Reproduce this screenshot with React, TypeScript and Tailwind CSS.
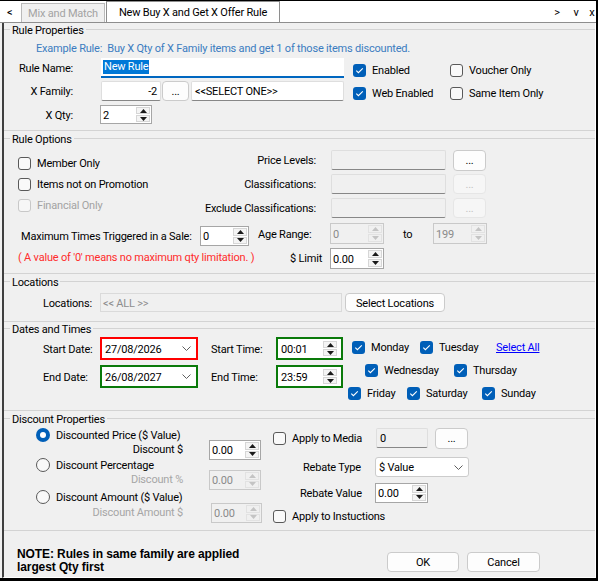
import React from "react";

type Children = { children?: React.ReactNode };

// text baseline nudge used on every text run
const T = "translate-y-px";

function Tri({ up = false, c }: { up?: boolean; c: string }) {
  return (
    <svg width="7" height="4" viewBox="0 0 7 4">
      <path d={up ? "M0 4 L3.5 0 L7 4Z" : "M0 0 L7 0 L3.5 4Z"} fill={c} />
    </svg>
  );
}

function Chevron() {
  return (
    <svg width="9" height="5" viewBox="0 0 9 5">
      <path d="M0.5 0.5 L4.5 4.5 L8.5 0.5" stroke="#5f5f5f" strokeWidth="1" fill="none" />
    </svg>
  );
}

function SpinButtons({ disabled = false, className = "" }: { disabled?: boolean; className?: string }) {
  const c = disabled ? "#c4c4c4" : "#1a1a1a";
  const half = `flex-1 flex items-center justify-center border ${
    disabled ? "border-[#e2e2e2] bg-[#f0f0f0]" : "border-[#d6d6d6] bg-[#f4f4f4]"
  }`;
  return (
    <div className={`w-[14px] flex flex-col gap-px shrink-0 ${className}`}>
      <div className={half}>
        <Tri up c={c} />
      </div>
      <div className={half}>
        <Tri c={c} />
      </div>
    </div>
  );
}

function Spin({ value, className = "", disabled = false }: { value: string; className?: string; disabled?: boolean }) {
  return (
    <div
      className={`flex shrink-0 border ${
        disabled ? "border-[#c9c9c9] bg-[#f0f0f0] text-[#8a8a8a]" : "border-[#a6a6a6] bg-white"
      } ${className}`}
    >
      <div className="flex-1 flex items-center pl-[2px]">
        <span className={T}>{value}</span>
      </div>
      <SpinButtons disabled={disabled} className="py-[1px] mr-[1px]" />
    </div>
  );
}

function Check({
  label,
  checked = false,
  disabled = false,
  className = "",
}: {
  label: string;
  checked?: boolean;
  disabled?: boolean;
  className?: string;
}) {
  return (
    <div className={`flex items-center shrink-0 ${className}`}>
      <span
        className={`w-[13px] h-[13px] rounded-[3px] shrink-0 flex items-center justify-center ${
          checked
            ? "bg-[#005fb8]"
            : disabled
            ? "border border-[#c8c8c8] bg-[#f6f6f6]"
            : "border border-[#595959] bg-[#f9f9f9]"
        }`}
      >
        {checked && (
          <svg width="13" height="13" viewBox="0 0 13 13">
            <path d="M3.3 6.6 L5.4 8.7 L9.8 4.3" stroke="white" strokeWidth="1.1" fill="none" />
          </svg>
        )}
      </span>
      <span className={`ml-[6px] whitespace-nowrap ${T} ${disabled ? "text-[#a3a3a3]" : ""}`}>{label}</span>
    </div>
  );
}

function Radio({ label, checked = false, className = "" }: { label: string; checked?: boolean; className?: string }) {
  return (
    <div className={`flex items-center h-[14px] ${className}`}>
      <span
        className={`w-[14px] h-[14px] rounded-full shrink-0 flex items-center justify-center ${
          checked ? "bg-[#005fb8]" : "border border-[#595959] bg-[#f9f9f9]"
        }`}
      >
        {checked && <span className="w-[6px] h-[6px] rounded-full bg-white" />}
      </span>
      <span className={`ml-[6px] whitespace-nowrap ${T}`}>{label}</span>
    </div>
  );
}

function Field({ className = "", disabled = false, children }: Children & { className?: string; disabled?: boolean }) {
  return (
    <div
      className={`h-[20px] shrink-0 flex items-center px-[3px] rounded-[2px] border border-[#dedede] border-b-[#878787] ${
        disabled ? "bg-[#f0f0f0]" : "bg-white"
      } ${className}`}
    >
      <span className={T}>{children}</span>
    </div>
  );
}

function Btn({ className = "", disabled = false, children }: Children & { className?: string; disabled?: boolean }) {
  return (
    <div
      className={`shrink-0 flex items-center justify-center rounded-[4px] border ${
        disabled ? "border-[#e6e6e6] bg-[#f6f6f6] text-[#c2c2c2]" : "border-[#cbcbcb] bg-[#fdfdfd]"
      } ${className}`}
    >
      <span className={T}>{children}</span>
    </div>
  );
}

function DateBox({ value, red = false }: { value: string; red?: boolean }) {
  return (
    <div
      className={`w-[98px] h-[23px] shrink-0 border-2 ${
        red ? "border-[#ff0000]" : "border-[#0a7a0a]"
      } bg-white flex items-center justify-between pl-[3px] pr-[5px]`}
    >
      <span className={T}>{value}</span>
      <Chevron />
    </div>
  );
}

function TimeBox({ value }: { value: string }) {
  return (
    <div className="w-[67px] h-[23px] shrink-0 border-2 border-[#0a7a0a] bg-white flex items-center pl-[3px] pr-[4px]">
      <span className={`flex-1 ${T}`}>{value}</span>
      <SpinButtons className="h-[15px]" />
    </div>
  );
}

function Group({ title, className = "", children }: Children & { title: string; className?: string }) {
  return (
    <section className={`relative shrink-0 border-y border-[#d3d3d3] ${className}`}>
      <span className="absolute left-[6px] top-[-6px] px-[2px] bg-[#f0f0f0] whitespace-nowrap">{title}</span>
      {children}
    </section>
  );
}

export default function App() {
  return (
    <div className="w-[598px] h-[581px] overflow-hidden bg-[#f0f0f0] border-t border-r-2 border-b-[3px] border-black flex flex-col font-['Roboto',sans-serif] text-[11px] leading-[14px] tracking-[-0.2px] text-black">
      {/* tab strip */}
      <div className="h-[22px] shrink-0 bg-white border-b border-[#8e8e8e] flex items-end">
        <span className={`self-center ml-[7px] w-[14px] ${T}`}>&lt;</span>
        <div className="h-[19px] w-[84px] border border-b-0 border-[#bababa] bg-[#f0f0f0] text-[#a3a3a3] flex items-center justify-center">
          <span className={T}>Mix and Match</span>
        </div>
        <div className="h-[21px] w-[174px] ml-px border-x border-t border-[#8e8e8e] bg-white flex items-center justify-center">
          <span className={T}>New Buy X and Get X Offer Rule</span>
        </div>
        <div className={`ml-auto self-center flex ${T}`}>
          <span className="w-[8px] text-center">&gt;</span>
          <span className="w-[8px] ml-[11px] text-center">v</span>
          <span className="w-[8px] ml-[8px] text-center">x</span>
        </div>
      </div>

      {/* form body */}
      <div className="flex-1 ml-[2px] border-l-2 border-r border-b border-l-[#3f3f3f] border-r-white border-b-white flex flex-col">
        <Group title="Rule Properties" className="mt-[6px] h-[102px]">
          <div className={`pt-[11px] pl-[32px] text-[#3b7cc0] whitespace-pre ${T}`}>
            Example Rule:  Buy X Qty of X Family items and get 1 of those items discounted.
          </div>
          <div className="mt-[3px] h-[20px] flex items-center">
            <span className={`w-[69px] text-right ${T}`}>Rule Name:</span>
            <div className="ml-[28px] w-[243px] h-[20px] shrink-0 bg-white border-b-2 border-[#0067c0] flex items-center pl-[2px]">
              <span className="bg-[#0078d7] text-white px-px leading-[14px]">New Rule</span>
            </div>
            <Check checked label="Enabled" className="ml-[9px] w-[97px] mt-[4px]" />
            <Check label="Voucher Only" className="mt-[4px]" />
          </div>
          <div className="mt-[3px] h-[20px] flex items-center">
            <span className={`w-[69px] text-right ${T}`}>X Family:</span>
            <Field className="ml-[28px] w-[60px] justify-end">-2</Field>
            <Btn className="ml-px w-[27px] h-[20px]">...</Btn>
            <Field className="ml-[2px] w-[153px]">&lt;&lt;SELECT ONE&gt;&gt;</Field>
            <Check checked label="Web Enabled" className="ml-[9px] w-[97px] mt-[4px]" />
            <Check label="Same Item Only" className="mt-[4px]" />
          </div>
          <div className="mt-[4px] h-[19px] flex items-center">
            <span className={`w-[69px] text-right ${T}`}>X Qty:</span>
            <Spin value="2" className="ml-[27px] w-[52px] h-[19px]" />
          </div>
        </Group>

        <Group title="Rule Options" className="mt-[7px] h-[136px]">
          <div className="pt-[11px] flex">
            <div className="ml-[14px] w-[162px] pt-[6px] flex flex-col gap-[7px]">
              <Check label="Member Only" />
              <Check label="Items not on Promotion" />
              <Check label="Financial Only" disabled />
            </div>
            <div className="flex flex-col gap-[4px]">
              <div className="h-[20px] flex items-center">
                <span className={`w-[136px] text-right ${T}`}>Price Levels:</span>
                <Field disabled className="ml-[15px] w-[115px]" />
                <Btn className="ml-[7px] w-[33px] h-[21px]">...</Btn>
              </div>
              <div className="h-[20px] flex items-center">
                <span className={`w-[136px] text-right ${T}`}>Classifications:</span>
                <Field disabled className="ml-[15px] w-[115px]" />
                <Btn disabled className="ml-[7px] w-[33px] h-[20px]">...</Btn>
              </div>
              <div className="h-[20px] flex items-center">
                <span className={`w-[136px] text-right ${T}`}>Exclude Classifications:</span>
                <Field disabled className="ml-[15px] w-[115px]" />
                <Btn disabled className="ml-[7px] w-[33px] h-[20px]">...</Btn>
              </div>
            </div>
          </div>
          <div className="mt-[5px] h-[23px] flex items-start">
            <span className="ml-[17px] w-[179px] mt-[7px] whitespace-nowrap">Maximum Times Triggered in a Sale:</span>
            <Spin value="0" className="mt-[3px] w-[49px] h-[20px]" />
            <span className="ml-[9px] w-[72px] mt-[5px]">Age Range:</span>
            <Spin value="0" disabled className="w-[54px] h-[21px]" />
            <span className="ml-[19px] w-[30px] mt-[5px]">to</span>
            <Spin value="199" disabled className="w-[54px] h-[21px]" />
          </div>
          <div className="mt-[2px] h-[21px] flex items-start">
            <span className="ml-[14px] w-[272px] mt-[3px] text-[#ff2b2b] whitespace-nowrap">
              ( A value of '0' means no maximum qty limitation. )
            </span>
            <span className="w-[40px] mt-[4px]">$ Limit</span>
            <Spin value="0.00" className="w-[54px] h-[21px]" />
          </div>
        </Group>

        <Group title="Locations" className="mt-[7px] h-[41px]">
          <div className="pt-[11px]">
            <div className="h-[19px] flex items-center">
              <span className={`ml-[39px] w-[57px] ${T}`}>Locations:</span>
              <div className="w-[242px] h-[19px] shrink-0 border border-[#dadada] flex items-center pl-[2px] text-[#8e8e8e]">
                <span className={T}>&lt;&lt; ALL &gt;&gt;</span>
              </div>
              <Btn className="ml-[3px] w-[100px] h-[19px]">Select Locations</Btn>
            </div>
          </div>
        </Group>

        <Group title="Dates and Times" className="mt-[6px] h-[83px]">
          <div className="flex">
            <div className="pt-[8px] flex flex-col gap-[5px]">
              <div className="h-[23px] flex items-center">
                <span className={`ml-[39px] w-[57px] ${T}`}>Start Date:</span>
                <DateBox value="27/08/2026" red />
                <span className={`ml-[13px] w-[65px] ${T}`}>Start Time:</span>
                <TimeBox value="00:01" />
              </div>
              <div className="h-[23px] flex items-center">
                <span className={`ml-[39px] w-[57px] ${T}`}>End Date:</span>
                <DateBox value="26/08/2027" />
                <span className={`ml-[13px] w-[65px] ${T}`}>End Time:</span>
                <TimeBox value="23:59" />
              </div>
            </div>
            <div className="ml-[5px] pt-[11px] flex flex-col gap-[9px]">
              <div className="ml-[4px] flex">
                <Check checked label="Monday" className="w-[68px]" />
                <Check checked label="Tuesday" className="w-[76px]" />
                <span className={`text-[#0000ff] underline ${T}`}>Select All</span>
              </div>
              <div className="ml-[17px] flex">
                <Check checked label="Wednesday" className="w-[89px]" />
                <Check checked label="Thursday" />
              </div>
              <div className="flex">
                <Check checked label="Friday" className="w-[59px]" />
                <Check checked label="Saturday" className="w-[75px]" />
                <Check checked label="Sunday" />
              </div>
            </div>
          </div>
        </Group>

        <Group title="Discount Properties" className="mt-[7px] h-[113px]">
          <div className="flex">
            <div className="ml-[32px] w-[147px] pt-[9px] flex flex-col">
              <Radio checked label="Discounted Price ($ Value)" />
              <span className={`text-right ${T}`}>Discount $</span>
              <Radio label="Discount Percentage" className="mt-[2px]" />
              <span className={`text-right text-[#a6a6a6] ${T}`}>Discount %</span>
              <Radio label="Discount Amount ($ Value)" className="mt-[4px]" />
              <span className={`mt-[1px] text-right text-[#a6a6a6] ${T}`}>Discount Amount $</span>
            </div>
            <div className="ml-[26px] w-[53px] pt-[21px] flex flex-col">
              <Spin value="0.00" className="w-[52px] h-[20px]" />
              <Spin value="0.00" disabled className="mt-[10px] w-[52px] h-[20px]" />
              <Spin value="0.00" disabled className="mt-[13px] ml-[2px] w-[51px] h-[20px]" />
            </div>
            <div className="ml-[11px] pt-[9px] flex flex-col">
              <div className="h-[20px] flex items-center">
                <Check label="Apply to Media" className="w-[103px]" />
                <Field disabled className="w-[52px]">0</Field>
                <Btn className="ml-[7px] w-[33px] h-[21px]">...</Btn>
              </div>
              <div className="mt-[9px] h-[20px] flex items-center">
                <span className={`ml-[30px] w-[72px] ${T}`}>Rebate Type</span>
                <div className="w-[94px] h-[20px] rounded-[3px] border border-[#cccccc] bg-white flex items-center justify-between pl-[3px] pr-[5px]">
                  <span className={T}>$ Value</span>
                  <Chevron />
                </div>
              </div>
              <div className="mt-[6px] h-[20px] flex items-center">
                <span className={`ml-[27px] w-[75px] ${T}`}>Rebate Value</span>
                <Spin value="0.00" className="w-[53px] h-[20px]" />
              </div>
              <Check label="Apply to Instuctions" className="mt-[6px]" />
            </div>
          </div>
        </Group>

        <div className="flex items-start">
          <div className="ml-[13px] w-[370px] mt-[17px] font-['Liberation_Sans',sans-serif] font-bold text-[12px] tracking-[-0.1px] leading-[13px]">
            NOTE: Rules in same family are applied
            <br />
            largest Qty first
          </div>
          <Btn className="mt-[21px] w-[72px] h-[20px]">OK</Btn>
          <Btn className="ml-[8px] mt-[21px] w-[73px] h-[20px]">Cancel</Btn>
        </div>
      </div>
    </div>
  );
}
